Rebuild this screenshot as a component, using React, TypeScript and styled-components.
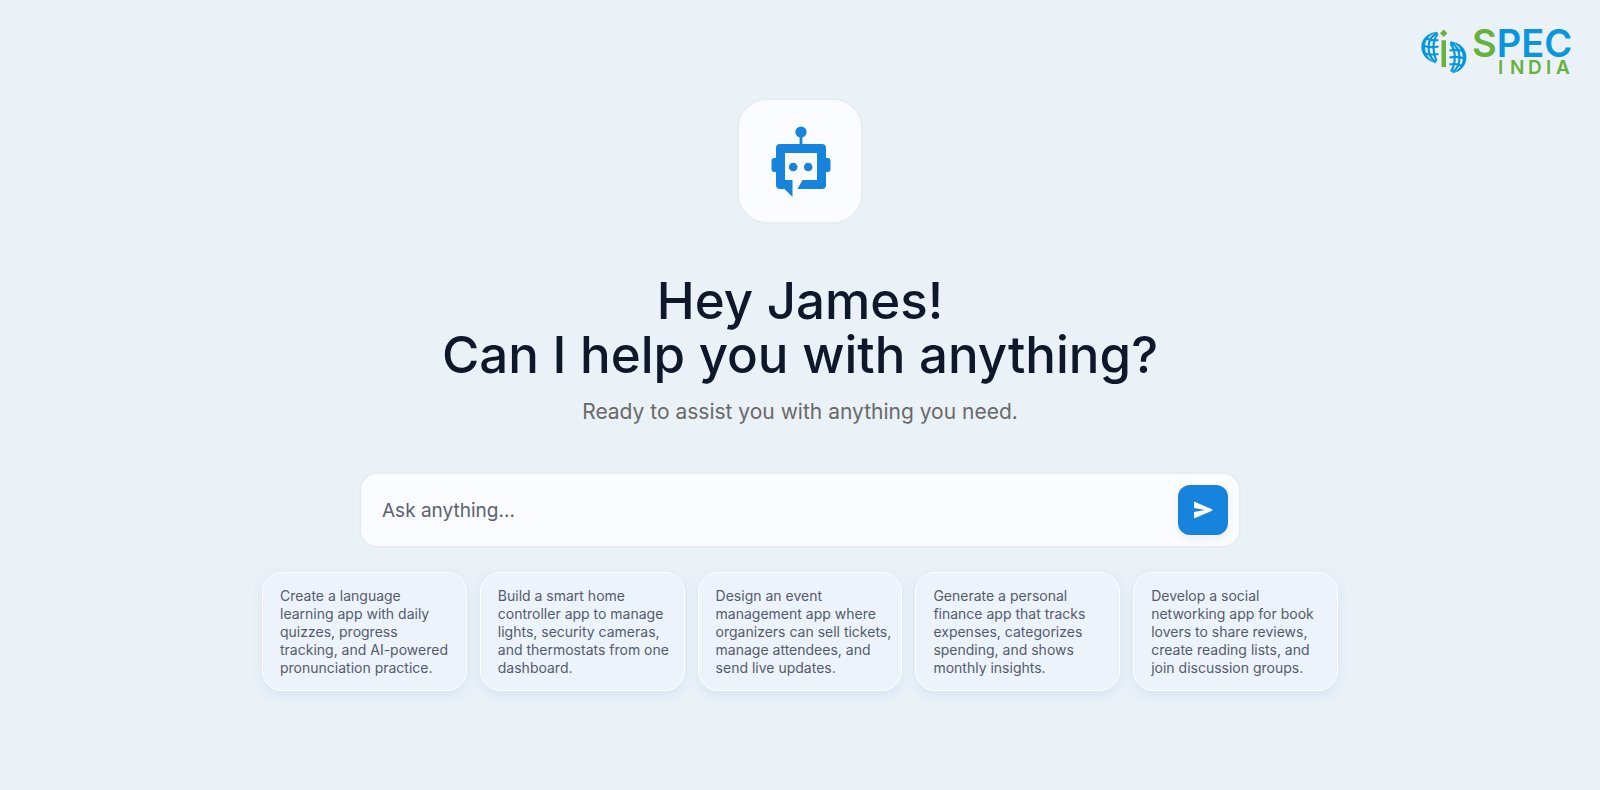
import React from 'react';
import styled, { createGlobalStyle } from 'styled-components';

const GlobalStyle = createGlobalStyle`
  *, *::before, *::after { box-sizing: border-box; }
  body {
    margin: 0;
    background: #eaf1f7;
    font-family: Inter, "Liberation Sans", sans-serif;
    color: #0f172a;
  }
`;

const Page = styled.div`
  min-height: 100vh;
  display: flex;
  flex-direction: column;
`;

const Header = styled.header`
  display: flex;
  justify-content: flex-end;
  padding: 19px 25px 0;
`;

const LogoSvg = styled.svg`
  display: block;
  width: 154px;
  height: 64px;
`;

const Main = styled.main`
  display: flex;
  flex-direction: column;
  align-items: center;
  padding: 15px 24px 48px;
`;

const BotTile = styled.div`
  display: flex;
  align-items: center;
  justify-content: center;
  width: 126px;
  height: 126px;
  border: 2px solid #e6ecf1;
  border-radius: 30px;
  background: #fbfcff;
`;

const Title = styled.h1`
  margin: 50px 0 0;
  font-size: 51px;
  line-height: 54px;
  font-weight: 500;
  text-align: center;
`;

const Subtitle = styled.p`
  margin: 16px 0 0;
  font-size: 21px;
  line-height: 28px;
  color: #696969;
  text-align: center;
`;

const AskForm = styled.form`
  display: flex;
  align-items: center;
  width: 100%;
  max-width: 882px;
  height: 76px;
  margin-top: 46px;
  padding: 0 11px 0 21px;
  border: 2px solid #e6ecf1;
  border-radius: 18px;
  background: #fbfcff;
`;

const AskInput = styled.input`
  flex: 1;
  min-width: 0;
  height: 48px;
  padding: 0;
  border: 0;
  outline: 0;
  background: transparent;
  font-family: inherit;
  font-size: 19px;
  color: #0f172a;
  &::placeholder { color: #5b6072; opacity: 1; }
`;

const SendButton = styled.button`
  display: flex;
  align-items: center;
  justify-content: center;
  width: 50px;
  height: 50px;
  padding: 0;
  border: 0;
  border-radius: 12px;
  background: #1683dc;
  box-shadow: 0 4px 8px rgba(40, 60, 120, 0.08);
  cursor: pointer;
`;

const Suggestions = styled.div`
  display: grid;
  grid-template-columns: repeat(5, 1fr);
  gap: 13px;
  width: 100%;
  max-width: 1076px;
  margin-top: 24px;
`;

const Suggestion = styled.button`
  padding: 14px 0 13px 17px;
  border: 1px solid #ffffff;
  border-radius: 20px;
  background: #ecf3fa;
  box-shadow: 0 4px 12px rgba(120, 160, 225, 0.16);
  font-family: inherit;
  font-size: 14px;
  line-height: 18px;
  text-align: left;
  color: #545b6d;
  white-space: pre-line;
  cursor: pointer;
`;

const suggestions = [
  'Create a language\nlearning app with daily\nquizzes, progress\ntracking, and AI-powered\npronunciation practice.',
  'Build a smart home\ncontroller app to manage\nlights, security cameras,\nand thermostats from one\ndashboard.',
  'Design an event\nmanagement app where\norganizers can sell tickets,\nmanage attendees, and\nsend live updates.',
  'Generate a personal\nfinance app that tracks\nexpenses, categorizes\nspending, and shows\nmonthly insights.',
  'Develop a social\nnetworking app for book\nlovers to share reviews,\ncreate reading lists, and\njoin discussion groups.',
];

const Logo = () => (
  <LogoSvg viewBox="0 -10 154 64" role="img" aria-label="SPEC INDIA">
    <g fill="#0a96df">
      <path d="M16.700 3C7 3 0.300 10 0.300 18C0.300 26 7 33 15.500 34C8 31 4 25 4 17.500C4 11 9 5 16.700 3Z" />
      <path d="M29 12.500C39 13 45.400 20 45.400 28C45.400 36.500 40 43 31 44.300C38 41 41.800 35.500 41.800 28.500C41.800 21.500 37 15 29 12.500Z" />
    </g>
    <g fill="none" stroke="#0a96df" strokeWidth="2.200">
      <path d="M16.500 3.500C11 6.500 7.500 11.500 7.500 18C7.500 24.500 10 30 15 33.500" />
      <path d="M16.500 5C13.500 9.500 12.200 14 12.500 19C12.700 24 13.500 28 15.500 32" />
      <path d="M5.500 9.500C9 11.200 13 11.700 17.500 11M2 16.500C7 18.500 12 18.500 17.500 17.500M4 24.500C8 26 12.500 25.700 17.500 25" />
      <path d="M29.500 13C35.500 16.500 38.500 22 38.500 28.500C38.500 35 36 40 31.500 43.500" />
      <path d="M29.500 14.500C32.500 18.500 33.800 23 33.800 28C33.800 33.500 32.500 38.500 30 42.500" />
      <path d="M28.500 21.500C33 20.500 37.500 20.700 41.500 22M28.500 28.500C34 27.300 39 27.500 44 29.500M28.500 35.500C33 34.500 37.500 35 41.500 37" />
    </g>
    <path d="M22.700 0.600L26.400 4.300L22.700 8L19 4.300ZM20.500 11.300H25V38H20.500Z" fill="#68b13e" />
    <g fontFamily="Inter, sans-serif">
      <text x="51" y="28" fontSize="38" fontWeight="600" fill="#0a96df">
        <tspan fill="#68b13e">S</tspan>PEC
      </text>
      <text x="77 89 107 125 135" y="45" fontSize="19" fontWeight="600" fill="#68b13e">INDIA</text>
    </g>
  </LogoSvg>
);

const BotIcon = () => (
  <svg width="62" height="72" viewBox="-2 -1 62 72" fill="#1683dc" aria-hidden="true">
    <circle cx="30" cy="6" r="5.600" />
    <rect x="28.600" y="9" width="2.800" height="12" />
    <path
      fillRule="evenodd"
      d="M9 18H51Q55 18 55 22V32H56.500Q59.500 32 59.500 35V43Q59.500 46 56.500 46H55V59Q55 63 51 63H26.500L31.500 54H46V27H14V54H21.500V71L13.500 63H9Q5 63 5 59V46H3.500Q0.500 46 0.500 43V35Q0.500 32 3.500 32H5V22Q5 18 9 18Z"
    />
    <circle cx="22.200" cy="41" r="4.300" />
    <circle cx="37.200" cy="41" r="4.300" />
  </svg>
);

const SendIcon = () => (
  <svg width="20" height="18" viewBox="0 0 20 18" fill="#ffffff" aria-hidden="true">
    <path d="M1 1.600Q1 0.400 2.200 0.900L19 8.200Q20.200 9 19 9.700L2.200 17.100Q1 17.500 1 16.300V11L12 9L1 7Z" />
  </svg>
);

export default function App() {
  return (
    <Page>
      <GlobalStyle />
      <Header>
        <Logo />
      </Header>
      <Main>
        <BotTile>
          <BotIcon />
        </BotTile>
        <Title>
          Hey James!
          <br />
          Can I help you with anything?
        </Title>
        <Subtitle>Ready to assist you with anything you need.</Subtitle>
        <AskForm onSubmit={(event) => event.preventDefault()}>
          <AskInput type="text" aria-label="Ask anything" placeholder="Ask anything…" />
          <SendButton type="submit" aria-label="Send">
            <SendIcon />
          </SendButton>
        </AskForm>
        <Suggestions>
          {suggestions.map((text) => (
            <Suggestion type="button" key={text}>
              {text}
            </Suggestion>
          ))}
        </Suggestions>
      </Main>
    </Page>
  );
}
